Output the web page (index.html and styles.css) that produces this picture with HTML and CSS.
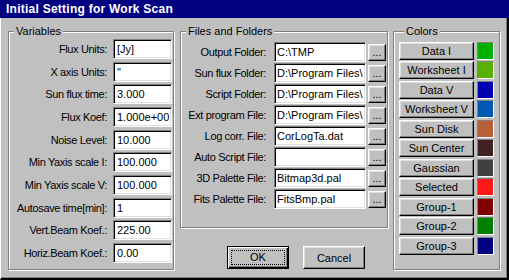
FILE: index.html
```html
<!DOCTYPE html>
<html>
	<head>
		<meta charset="utf-8">
		<title>Initial Setting for Work Scan</title>
		<link rel="stylesheet" href="styles.css">
	</head>
	<body>
		<div class="dialog">
			<div class="titlebar">Initial Setting for Work Scan</div>
			<div class="client">
				<fieldset class="group vars">
					<legend>Variables</legend>
					<div class="rows">
						<div class="row"><label>Flux Units:</label><input class="edit" type="text" value="[Jy]"></div>
						<div class="row"><label>X axis Units:</label><input class="edit" type="text" value="&quot;"></div>
						<div class="row"><label>Sun flux time:</label><input class="edit" type="text" value="3.000"></div>
						<div class="row"><label>Flux Koef:</label><input class="edit" type="text" value="1.000e+00"></div>
						<div class="row"><label>Noise Level:</label><input class="edit" type="text" value="10.000"></div>
						<div class="row"><label>Min Yaxis scale I:</label><input class="edit" type="text" value="100.000"></div>
						<div class="row"><label>Min Yaxis scale V:</label><input class="edit" type="text" value="100.000"></div>
						<div class="row"><label>Autosave time[min]:</label><input class="edit" type="text" value="1"></div>
						<div class="row"><label>Vert.Beam Koef.:</label><input class="edit" type="text" value="225.00"></div>
						<div class="row"><label>Horiz.Beam Koef.:</label><input class="edit" type="text" value="0.00"></div>
					</div>
				</fieldset>
				<div class="middle">
					<fieldset class="group files">
						<legend>Files and Folders</legend>
						<div class="rows">
							<div class="row"><label>Output Folder:</label><input class="edit" type="text" value="C:\TMP"><button class="btn browse">...</button></div>
							<div class="row"><label>Sun flux Folder:</label><input class="edit" type="text" value="D:\Program Files\SunScan\Flux"><button class="btn browse">...</button></div>
							<div class="row"><label>Script Folder:</label><input class="edit" type="text" value="D:\Program Files\SunScan\Script"><button class="btn browse">...</button></div>
							<div class="row"><label>Ext program File:</label><input class="edit" type="text" value="D:\Program Files\SunScan\ext.exe"><button class="btn browse">...</button></div>
							<div class="row"><label>Log corr. File:</label><input class="edit" type="text" value="CorLogTa.dat"><button class="btn browse">...</button></div>
							<div class="row"><label>Auto Script File:</label><input class="edit" type="text" value=""><button class="btn browse">...</button></div>
							<div class="row"><label>3D Palette File:</label><input class="edit" type="text" value="Bitmap3d.pal"><button class="btn browse">...</button></div>
							<div class="row"><label>Fits Palette File:</label><input class="edit" type="text" value="FitsBmp.pal"><button class="btn browse">...</button></div>
						</div>
					</fieldset>
					<div class="actions">
						<button class="btn push default"><span>OK</span></button>
						<button class="btn push">Cancel</button>
					</div>
				</div>
				<fieldset class="group colors">
					<legend>Colors</legend>
					<div class="rows">
						<div class="row"><button class="btn pick">Data I</button><span class="swatch" style="background:#00b000"></span></div>
						<div class="row"><button class="btn pick">Worksheet I</button><span class="swatch" style="background:#58b000"></span></div>
						<div class="row"><button class="btn pick">Data V</button><span class="swatch" style="background:#0000b0"></span></div>
						<div class="row"><button class="btn pick">Worksheet V</button><span class="swatch" style="background:#0058b0"></span></div>
						<div class="row"><button class="btn pick">Sun Disk</button><span class="swatch" style="background:#b86038"></span></div>
						<div class="row"><button class="btn pick">Sun Center</button><span class="swatch" style="background:#402020"></span></div>
						<div class="row"><button class="btn pick">Gaussian</button><span class="swatch" style="background:#404040"></span></div>
						<div class="row"><button class="btn pick">Selected</button><span class="swatch" style="background:#ff1818"></span></div>
						<div class="row"><button class="btn pick">Group-1</button><span class="swatch" style="background:#800000"></span></div>
						<div class="row"><button class="btn pick">Group-2</button><span class="swatch" style="background:#008000"></span></div>
						<div class="row"><button class="btn pick">Group-3</button><span class="swatch" style="background:#000080"></span></div>
					</div>
				</fieldset>
			</div>
		</div>
	</body>
</html>
```

FILE: styles.css
```css
*{margin: 0;padding: 0;box-sizing: border-box;}
body{
	background: #c0c0c0;
	font: 11px "Liberation Sans", Arial, sans-serif;
	color: #000;
}
.dialog{width: 509px;height: 280px;background: #c0c0c0;}
.titlebar{
	height: 18px;
	background: #000080;
	color: #fff;
	font-size: 12px;font-weight: bold;
	letter-spacing: 0.25px;
	line-height: 18px;
	padding-left: 6px;
}
.client{
	display: flex;
	height: 262px;
	padding: 7px 0 0 7px;
	border-left: 1px solid #fff;
	border-right: 2px solid #000;
	border-bottom: 2px solid #000;
	box-shadow: inset -1px -1px 0 #808080;
}

/* etched group boxes */
.group{
	border: 1px solid #808080;
	box-shadow: 1px 1px 0 #fff, inset 1px 1px 0 #fff;
	min-width: 0;
}
.group legend{
	margin-left: 5px;
	padding: 0 2px;
	line-height: 13px;
	background: #c0c0c0;
}
.vars{width: 166px;height: 245px;padding-top: 1px;}
.files{width: 208px;height: 203px;padding-top: 4px;}
.colors{width: 107px;height: 245px;margin-left: 5px;padding: 4px 0 0 5px;}
.middle{margin-left: 6px;}

.rows{display: flex;flex-direction: column;}
.vars .rows{gap: 2.67px;}
.files .rows{gap: 1px;}
.colors .rows{gap: 1.47px;}
.row{display: flex;align-items: center;height: 20px;}
.colors .row{height: 18px;}
.row label{text-align: right;white-space: nowrap;letter-spacing: -0.35px;}
.vars label{width: 98px;margin-right: 6px;}
.files label{width: 85px;margin-right: 8px;}

/* sunken edit box */
.edit{
	height: 20px;
	font: inherit;
	color: #000;
	background: #fff;
	border: 1px solid;
	border-color: #808080 #fff #fff #808080;
	box-shadow: inset 1px 1px 0 #000, inset -1px -1px 0 #dfdfdf;
	outline: 0;
	padding: 0 2px 0 3px;
}
.vars .edit{width: 59px;}
.files .edit{width: 92px;padding-left: 2px;}

/* raised buttons */
.btn{
	font: inherit;
	color: #000;
	background: #c0c0c0;
	border: 1px solid;
	border-color: #fff #000 #000 #fff;
	box-shadow: inset -1px -1px 0 #808080, inset 1px 1px 0 #dfdfdf;
	outline: 0;
}
.browse{width: 18px;height: 17px;margin-left: 2px;line-height: 13px;}
.pick{width: 75px;height: 18px;}
.swatch{
	width: 17px;height: 18px;
	margin-left: 3px;
	border: 1px solid;
	border-color: #808080 #fff #fff #808080;
}

.actions{display: flex;margin-top: 18px;padding-left: 47px;}
.push{width: 62px;height: 23px;}
.push + .push{margin-left: 14px;}
.default{
	border-color: #000;
	box-shadow: inset 1px 1px 0 #fff, inset -1px -1px 0 #000, inset -2px -2px 0 #808080;
	padding: 3px;
}
.default span{
	display: block;
	height: 100%;
	border: 1px dotted #000;
	line-height: 13px;
}
```
